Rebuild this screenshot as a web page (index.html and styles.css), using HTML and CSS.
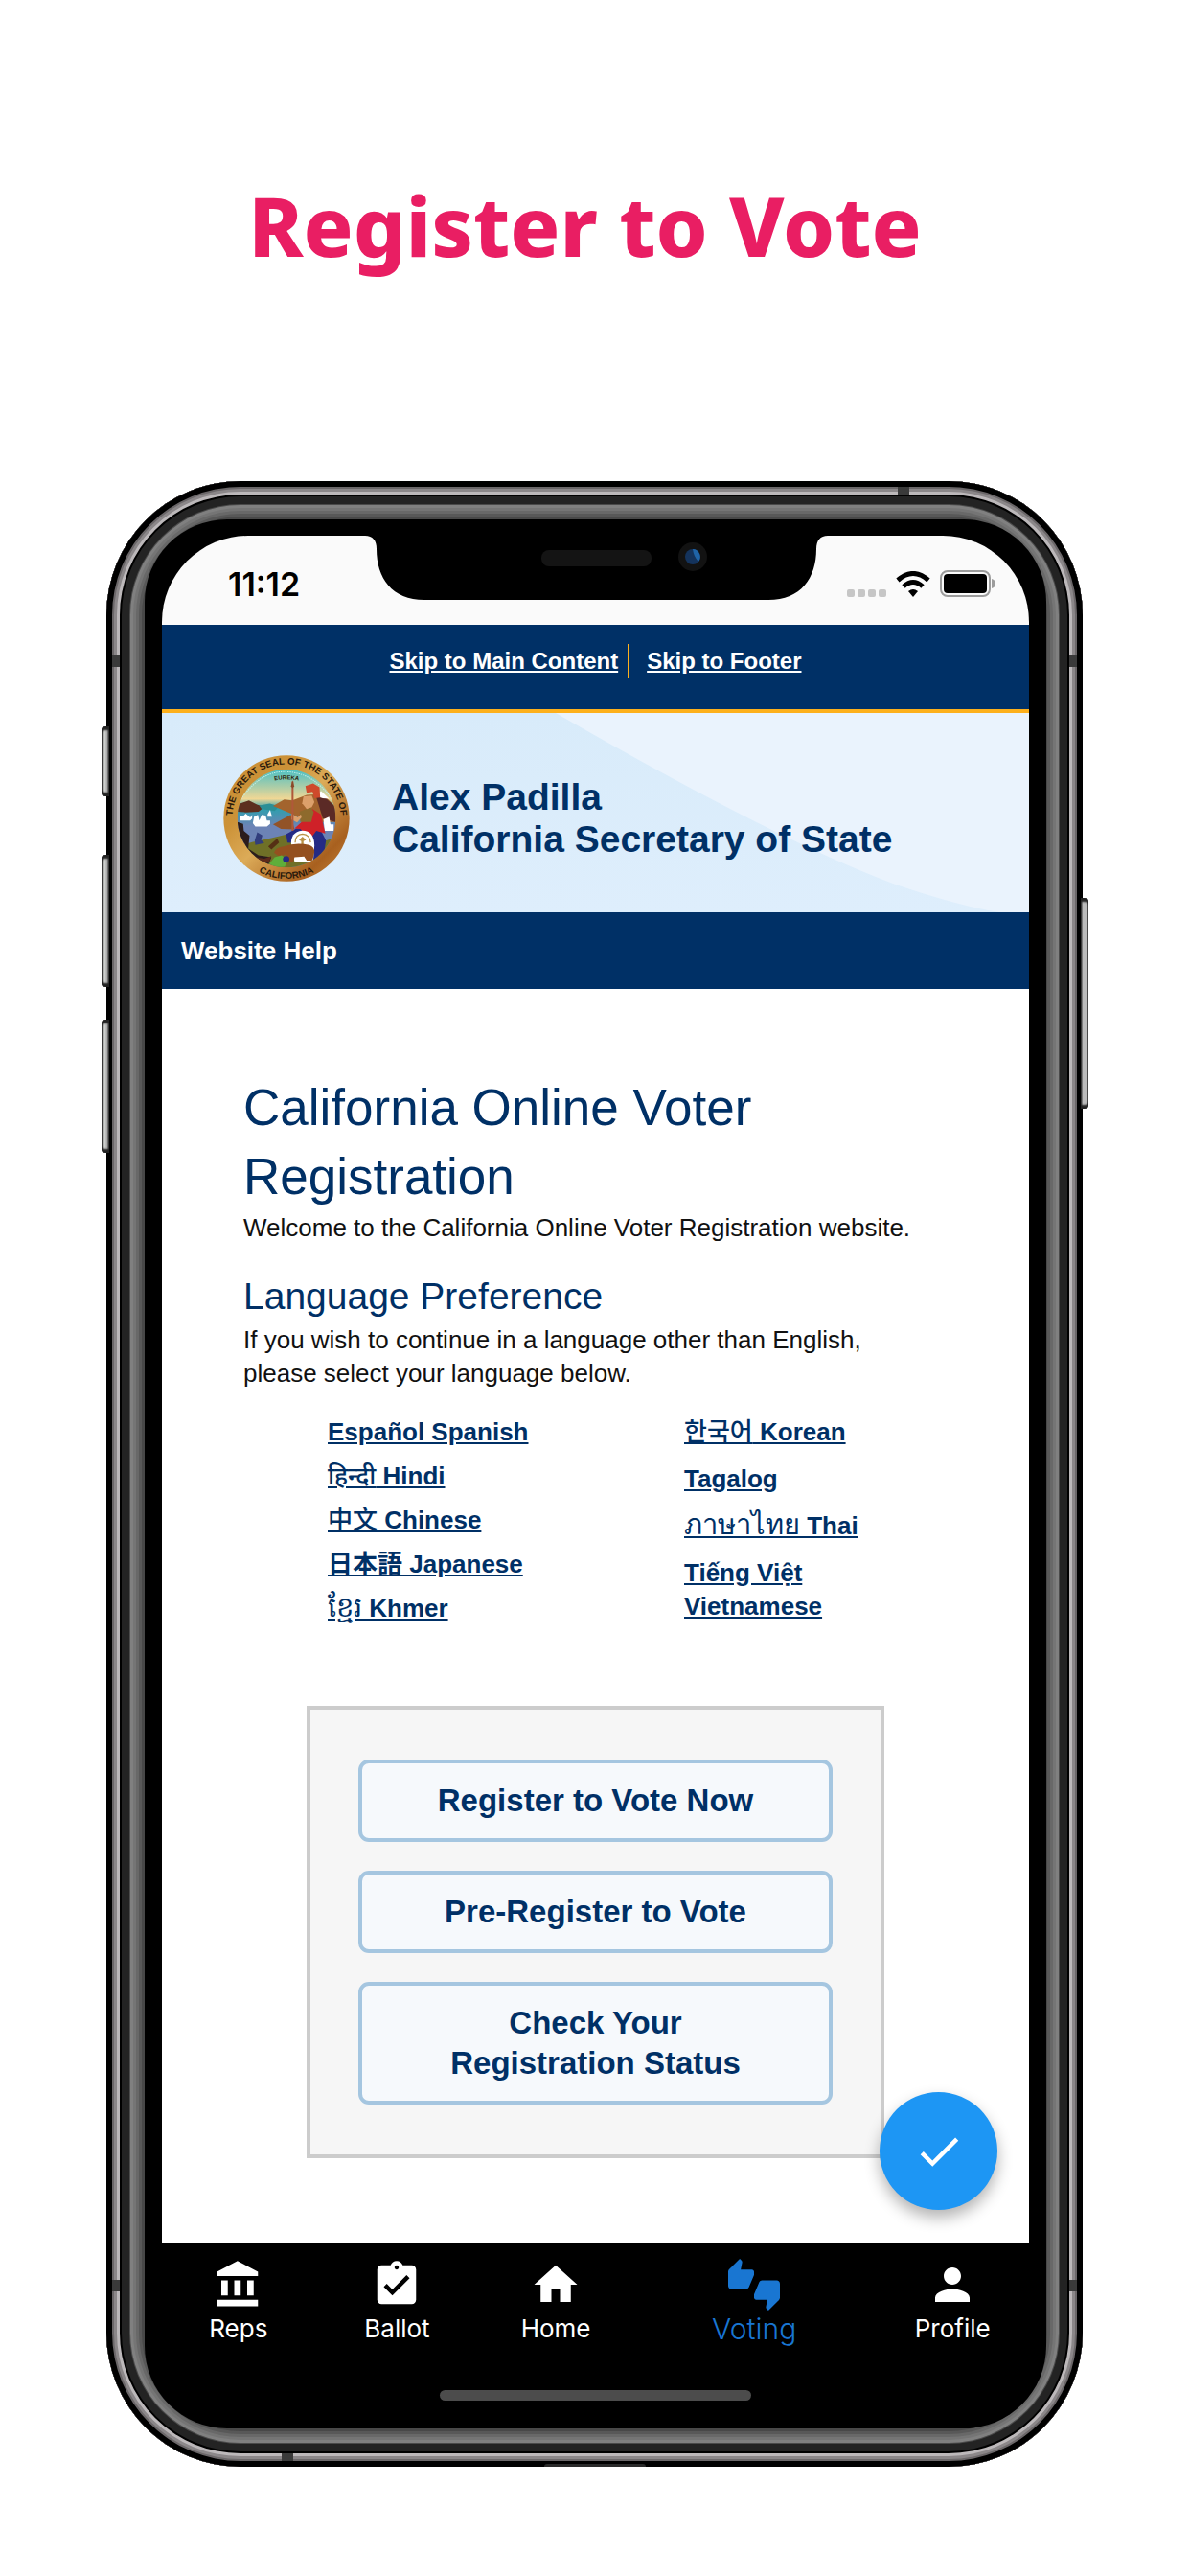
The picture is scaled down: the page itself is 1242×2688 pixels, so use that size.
FILE: index.html
```html
<!DOCTYPE html>
<html lang="en">
<head>
    <meta charset="UTF-8">
    <meta name="viewport" content="width=device-width, initial-scale=1.0">
    <title>Register to Vote</title>
    <link rel="stylesheet" href="styles.css">
</head>
<body>
    <h1 class="headline">Register to Vote</h1>

    <div class="phone">
        <!-- side keys -->
        <span class="key key-mute"></span>
        <span class="key key-up"></span>
        <span class="key key-down"></span>
        <span class="key key-power"></span>
        <!-- antenna lines -->
        <span class="antenna antenna-top"></span>
        <span class="antenna antenna-bottom"></span>
        <span class="antenna antenna-left antenna-high"></span>
        <span class="antenna antenna-left antenna-low"></span>
        <span class="antenna antenna-right antenna-high"></span>
        <span class="antenna antenna-right antenna-low"></span>
        <span class="port"></span>

        <div class="bezel">
            <div class="screen">
                <svg class="notch" viewBox="0 0 483 67" aria-hidden="true">
                    <path d="M0 0C8 0 12 5 12 14C12 44 28 67 62 67H421C455 67 471 44 471 14C471 5 475 0 483 0Z" fill="#000"/>
                    <rect x="184" y="15" width="115" height="17" rx="8" fill="#141414"/>
                    <circle cx="342" cy="22" r="15" fill="#121212"/>
                    <circle cx="342" cy="22" r="8" fill="#14335c"/>
                    <path d="M342 14a8 8 0 0 1 6 13q-5-5-6-13z" fill="#1f64a8"/>
                </svg>

                <div class="status-bar">
                    <span class="time">11:12</span>
                    <div class="status-icons">
                        <svg width="41" height="8" viewBox="0 0 41 8" fill="#c6c6c6">
                            <rect width="8" height="8" rx="2"/>
                            <rect x="11" width="8" height="8" rx="2"/>
                            <rect x="22" width="8" height="8" rx="2"/>
                            <rect x="33" width="8" height="8" rx="2"/>
                        </svg>
                        <svg width="36" height="27" viewBox="0 0 36 27">
                            <path d="M2 9.500Q18-4.500 34 9.500M8 16Q18 7 28 16" fill="none" stroke="#000" stroke-width="5"/>
                            <path d="M13 21Q18 17 23 21L18 27z"/>
                        </svg>
                        <svg width="59" height="28" viewBox="0 0 59 28">
                            <rect x="1" y="1" width="51" height="26" rx="7" fill="none" stroke="#9c9c9c" stroke-width="2"/>
                            <rect x="4" y="4" width="45" height="20" rx="4"/>
                            <path d="M54 9q4 1 4 5t-4 5z" fill="#9c9c9c"/>
                        </svg>
                    </div>
                </div>

                <nav class="skip-links">
                    <a href="#main">Skip to Main Content</a>
                    <a href="#footer">Skip to Footer</a>
                </nav>

                <header class="site-header">
                    <svg class="swoosh" viewBox="0 0 905 208" preserveAspectRatio="none" aria-hidden="true">
                        <path d="M411 0Q640 132 763 178Q830 201 874 208H905V0Z" fill="#eaf3fd"/>
                    </svg>
                    <svg class="seal" viewBox="40 54 394 394" role="img" aria-label="Great Seal of the State of California">
                        <defs>
                            <linearGradient id="gold" x1="0" y1="0" x2="1" y2="1">
                                <stop offset="0" stop-color="#c98f35"/>
                                <stop offset=".3" stop-color="#cc9238"/>
                                <stop offset=".5" stop-color="#dcab58"/>
                                <stop offset=".8" stop-color="#a8601f"/>
                                <stop offset="1" stop-color="#c98a3c"/>
                            </linearGradient>
                            <linearGradient id="sky" x1="0" y1="0" x2="0" y2="1">
                                <stop offset="0" stop-color="#49bfc4"/>
                                <stop offset=".3" stop-color="#efd795"/>
                                <stop offset=".4" stop-color="#2f9fae"/>
                                <stop offset=".58" stop-color="#6c83b5"/>
                                <stop offset="1" stop-color="#6c83b5"/>
                            </linearGradient>
                            <clipPath id="disc"><circle cx="237" cy="251" r="153"/></clipPath>
                            <path id="ringTop" d="M76 303A169 169 0 1 1 398 303"/>
                            <path id="ringBottom" d="M104 384A188 188 0 0 0 370 384"/>
                            <path id="eureka" d="M185 137Q237 122 290 137"/>
                        </defs>
                        <circle cx="237" cy="251" r="196" fill="url(#gold)"/>
                        <g clip-path="url(#disc)">
                            <rect x="84" y="98" width="306" height="306" fill="url(#sky)"/>
                            <path d="M96 190Q160 100 237 106Q320 108 378 190" fill="none" stroke="#c5f1ee" stroke-width="3" stroke-dasharray="4 3"/>
                            <path d="M84 208L120 195L145 208L168 215L150 230L110 232L84 230Z" fill="#5c2f1e"/>
                            <path d="M152 211L185 205L215 213L200 228L160 222Z" fill="#2b8f96"/>
                            <path d="M195 212L230 192L255 195L300 178L350 175L390 215V262H300L250 235Z" fill="#a3642d"/>
                            <path d="M330 185L350 180L390 215V262L350 250Z" fill="#5b2a26"/>
                            <path d="M325 180L345 166L370 190L350 188Z" fill="#fff"/>
                            <path d="M195 270L250 240L262 285L220 284Z" fill="#925328"/>
                            <path d="M84 338L130 325L190 312L240 300L330 330L390 310V404H84Z" fill="#6f7027"/>
                            <path d="M84 262L102 268L104 290L122 305L118 345L150 366L190 372L180 396L130 390L84 340Z" fill="#2b1c1c"/>
                            <g fill="#fff">
                                <path d="M136 246L148 240L152 258L160 240L172 242L176 258H186V268L176 276H140L132 266Z"/>
                                <path d="M92 242H104L110 236L124 248L130 240V252L124 258H94Z"/>
                                <path d="M178 238L186 224L192 246H178Z"/>
                                <path d="M352 254L370 246L374 270H384V290H356Z"/>
                            </g>
                            <path d="M138 320L146 294L162 304L158 318L168 328L140 334Z" fill="#313d7c"/>
                            <path d="M180 338L208 314L214 326L190 348Z" fill="#553014"/>
                            <path d="M236 300L268 282L345 290L360 320L352 372L322 384L300 330L240 326Z" fill="#252a84"/>
                            <path d="M318 222L344 238L358 298L330 290L312 314L280 284L262 282L284 262Z" fill="#cf2128"/>
                            <path d="M278 230L312 216L322 230L314 262L280 262Z" fill="#8e6a2c"/>
                            <path d="M290 182L316 180L324 200L316 216L300 222L286 204Z" fill="#dca06b"/>
                            <path d="M296 150L320 142L340 154L342 186L324 188L318 168L300 172Z" fill="#cf4a2c"/>
                            <path d="M252 236L272 248L282 238L284 248L270 264L252 254Z" fill="#dca06b"/>
                            <path d="M256 136V290" stroke="#b0583a" stroke-width="6"/>
                            <path d="M256 132L261 150L256 158L251 150Z" fill="#8a4a2a"/>
                            <path d="M252 334Q248 294 286 289Q324 290 324 336L320 386H262Z" fill="#fff"/>
                            <path d="M264 326Q264 302 287 300Q310 302 312 326" fill="none" stroke="#b99247" stroke-width="4"/>
                            <path d="M276 318L287 308L298 318L290 322V334H283V322Z" fill="#b99247"/>
                            <path d="M198 358Q204 340 228 338Q268 324 308 334Q324 340 324 356L318 382H300L292 370L262 372L258 386H238L234 364L214 370Z" fill="#94501f"/>
                            <path d="M184 392L200 372L222 366L240 380L232 402L200 404Z" fill="#5fae3a"/>
                            <circle cx="236" cy="378" r="10" fill="#252a84"/>
                            <path d="M142 372L168 376L190 368L182 388L160 390Z" fill="#5d2a1b"/>
                        </g>
                        <text class="seal-text"><textPath href="#ringTop" startOffset="50%">THE GREAT SEAL OF THE STATE OF</textPath></text>
                        <text class="seal-text"><textPath href="#ringBottom" startOffset="50%">CALIFORNIA</textPath></text>
                        <text class="seal-text seal-motto"><textPath href="#eureka" startOffset="50%">EUREKA</textPath></text>
                    </svg>
                    <p class="office">Alex Padilla<br>California Secretary of State</p>
                </header>

                <nav class="menu-bar">
                    <a href="#help">Website Help</a>
                </nav>

                <main class="content" id="main">
                    <h2>California Online Voter Registration</h2>
                    <p>Welcome to the California Online Voter Registration website.</p>
                    <h3>Language Preference</h3>
                    <p>If you wish to continue in a language other than English, please select your language below.</p>

                    <div class="languages">
                        <ul>
                            <li><a href="#es">Español Spanish</a></li>
                            <li><a href="#hi"><span class="thin" lang="hi">हिन्दी</span> Hindi</a></li>
                            <li><a href="#zh"><span class="thin" lang="zh">中文</span> Chinese</a></li>
                            <li><a href="#ja"><span lang="ja">日本語</span> Japanese</a></li>
                            <li><a href="#km"><span class="thin tall" lang="km">ខ្មែរ</span> Khmer</a></li>
                        </ul>
                        <ul class="wide">
                            <li><a href="#ko"><span class="thin" lang="ko">한국어</span> Korean</a></li>
                            <li><a href="#tl">Tagalog</a></li>
                            <li><a href="#th"><span class="thin tall" lang="th">ภาษาไทย</span> Thai</a></li>
                            <li><a href="#vi">Tiếng Việt Vietnamese</a></li>
                        </ul>
                    </div>

                    <div class="actions">
                        <button type="button">Register to Vote Now</button>
                        <button type="button">Pre-Register to Vote</button>
                        <button type="button">Check Your<br>Registration Status</button>
                    </div>

                    <button type="button" class="fab" aria-label="Done">
                        <svg viewBox="0 0 24 24"><path d="M9 16.170L4.830 12l-1.420 1.410L9 19 21 7l-1.410-1.410z"/></svg>
                    </button>
                </main>

                <footer class="tab-bar" id="footer">
                    <nav class="tabs">
                        <a href="#reps">
                            <svg viewBox="0 0 24 24"><path d="M4 10v7h3v-7H4zm6 0v7h3v-7h-3zM2 22h19v-3H2v3zm14-12v7h3v-7h-3zm-4.500-9L2 6v2h19V6l-9.500-5z"/></svg>
                            Reps
                        </a>
                        <a href="#ballot">
                            <svg viewBox="0 0 24 24"><path d="M19 3h-4.180C14.400 1.840 13.300 1 12 1c-1.300 0-2.400.84-2.820 2H5c-1.100 0-2 .9-2 2v14c0 1.100.9 2 2 2h14c1.100 0 2-.9 2-2V5c0-1.100-.9-2-2-2zm-7 0c.55 0 1 .45 1 1s-.45 1-1 1-1-.45-1-1 .45-1 1-1zm-2 14l-4-4 1.410-1.410L10 14.170l6.590-6.590L18 9l-8 8z"/></svg>
                            Ballot
                        </a>
                        <a href="#home">
                            <svg viewBox="0 0 24 24"><path d="M10 20v-6h4v6h5v-8h3L12 3 2 12h3v8z"/></svg>
                            Home
                        </a>
                        <a href="#voting" class="active">
                            <svg viewBox="0 0 24 24"><path d="M12 6c0-.55-.45-1-1-1H5.820l.66-3.180.02-.23c0-.31-.13-.59-.33-.8L5.380 0 .44 4.940C.17 5.210 0 5.590 0 6v6.500c0 .83.67 1.500 1.500 1.500h6.750c.62 0 1.150-.38 1.380-.91l2.260-5.290c.07-.17.11-.36.11-.55V6zm10.500 4h-6.750c-.62 0-1.150.38-1.380.91l-2.260 5.290c-.07.17-.11.36-.11.55V18c0 .55.45 1 1 1h5.180l-.66 3.180-.02.24c0 .31.13.59.33.8l.79.78 4.940-4.940c.27-.27.44-.65.44-1.060v-6.500c0-.83-.67-1.500-1.500-1.500z"/></svg>
                            Voting
                        </a>
                        <a href="#profile">
                            <svg viewBox="0 0 24 24"><path d="M12 12c2.210 0 4-1.790 4-4s-1.790-4-4-4-4 1.790-4 4 1.790 4 4 4zm0 2c-2.670 0-8 1.340-8 4v2h16v-2c0-2.660-5.330-4-8-4z"/></svg>
                            Profile
                        </a>
                    </nav>
                    <div class="home-indicator"></div>
                </footer>
            </div>
        </div>
    </div>
</body>
</html>
```
FILE: styles.css
```css
body {
    margin: 0;
    padding: 176px 112px 114px 111px;
    background-color: #fff;
    font-family: "Liberation Sans", Arial, "Noto Sans", "Noto Sans CJK SC", sans-serif;
}
h2, h3, p, ul {
    margin: 0;
    padding: 0;
    font-weight: normal;
}
.headline {
    margin: 0 20px 208px 0;
    color: #e91e63;
    font-family: "Noto Sans", sans-serif;
    font-size: 86px;
    font-weight: 800;
    line-height: 118px;
    text-align: center;
}

/* Device */
.phone {
    position: relative;
    padding: 40px 38px 40px 40px;
    border-radius: 140px;
    background-color: #484848;
    box-shadow:
        inset 0 0 0 6px #000,
        inset 0 0 0 8px #6b6769,
        inset 0 0 0 11px #8b8789,
        inset 0 0 0 14px #bcb8ba,
        inset 0 0 0 16px #000,
        inset 0 0 0 24px #232323,
        inset 0 0 0 25px #4a4a4a,
        inset 0 0 0 28px #808080,
        inset 0 0 0 31px #757575,
        inset 0 0 0 34px #686868,
        inset 0 0 0 37px #585858;
}
.bezel {
    padding: 17px 18px 18px;
    border-radius: 86px;
    background-color: #000;
}
.screen {
    position: relative;
    overflow: hidden;
    border-radius: 90px;
    background-color: #000;
}
.key {
    position: absolute;
    left: -5px;
    width: 8px;
    border-radius: 4px 0 0 4px;
    background: linear-gradient(90deg, #333, #d2d4d2 40%, #aaa 70%, #333);
    box-shadow: inset 0 4px 2px #222, inset 0 -4px 2px #222;
}
.key-mute {
    top: 256px;
    height: 73px;
}
.key-up {
    top: 390px;
    height: 138px;
}
.key-down {
    top: 562px;
    height: 139px;
}
.key-power {
    top: 435px;
    left: auto;
    right: -6px;
    height: 220px;
    border-radius: 0 4px 4px 0;
    background: linear-gradient(90deg, #333, #bbb 30%, #bbb 70%, #555);
}
.antenna {
    position: absolute;
    width: 12px;
    height: 8px;
    background-color: #3a3a3a;
}
.antenna-top {
    top: 6px;
    right: 181px;
}
.antenna-bottom {
    bottom: 6px;
    left: 183px;
}
.antenna-left,
.antenna-right {
    width: 8px;
    height: 12px;
}
.antenna-left {
    left: 6px;
}
.antenna-right {
    right: 6px;
}
.antenna-high {
    top: 182px;
}
.antenna-low {
    bottom: 183px;
}
.port {
    position: absolute;
    bottom: 0;
    left: 50%;
    width: 106px;
    height: 3px;
    margin-left: -53px;
    border-radius: 3px 3px 0 0;
    background-color: #2a2a2a;
}
.notch {
    position: absolute;
    top: 0;
    left: 50%;
    width: 483px;
    height: 67px;
    margin-left: -241px;
}

/* Status bar */
.status-bar {
    display: flex;
    justify-content: space-between;
    align-items: flex-end;
    height: 64px;
    padding: 0 34px 29px 69px;
    background-color: #fafafa;
}
.time {
    font-family: Inter, sans-serif;
    font-size: 34px;
    font-weight: 600;
    line-height: 26px;
}
.status-icons {
    display: flex;
    align-items: flex-end;
    gap: 10px;
}

/* Site header */
.skip-links {
    display: flex;
    justify-content: center;
    align-items: flex-start;
    padding: 20px 0 32px;
    border-bottom: 4px solid #fdb01c;
    background-color: #003066;
}
.skip-links a {
    color: #fff;
    font-size: 24px;
    font-weight: bold;
    line-height: 36px;
}
.skip-links a:first-child {
    padding-right: 10px;
    margin-right: 18px;
    border-right: 2px solid #fdb01c;
}
.site-header {
    position: relative;
    display: flex;
    align-items: center;
    gap: 44px;
    height: 196px;
    padding: 12px 64px 0;
    background: linear-gradient(#d8ebfa, #deeefc);
}
.swoosh {
    position: absolute;
    top: 0;
    left: 0;
    width: 100%;
    height: 100%;
}
.seal {
    position: relative;
    flex: none;
    width: 132px;
    height: 132px;
}
.seal-text {
    fill: #2b1a0c;
    font-size: 29px;
    font-weight: bold;
    text-anchor: middle;
}
.seal-motto {
    font-size: 18px;
}
.office {
    position: relative;
    color: #003066;
    font-size: 39px;
    font-weight: bold;
    line-height: 44px;
}
.menu-bar {
    padding: 20px;
    background-color: #003066;
}
.menu-bar a {
    display: block;
    color: #fff;
    font-size: 26px;
    font-weight: bold;
    line-height: 40px;
    text-decoration: none;
}

/* Main content */
.content {
    position: relative;
    padding: 88px 85px 89px;
    background-color: #fff;
}
.content h2 {
    color: #003066;
    font-size: 53px;
    line-height: 72px;
}
.content h3 {
    margin-top: 26px;
    color: #003066;
    font-size: 39px;
    font-weight: normal;
    line-height: 56px;
}
.content p {
    max-width: 720px;
    color: #111;
    font-size: 26px;
    line-height: 35px;
}
.languages {
    display: grid;
    grid-template-columns: 3fr 2fr;
    padding: 26px 27px 84px 88px;
}
.languages ul {
    display: flex;
    flex-direction: column;
    gap: 11px;
    list-style: none;
}
.languages .wide {
    gap: 14px;
}
.languages li {
    font-size: 26px;
    font-weight: bold;
    line-height: 35px;
}
.languages a {
    color: #003066;
}
.thin {
    font-weight: 500;
}
.tall {
    font-size: 29px;
    line-height: 1;
}
.actions {
    display: flex;
    flex-direction: column;
    gap: 30px;
    margin: 0 66px;
    padding: 52px 50px;
    border: 4px solid #ccc;
    background-color: #f6f6f6;
}
.actions button {
    padding: 18px;
    border: 4px solid #a5c6e0;
    border-radius: 11px;
    background-color: #f6f9fc;
    color: #003066;
    font-family: inherit;
    font-size: 33px;
    font-weight: bold;
    line-height: 42px;
}
.fab {
    position: absolute;
    right: 33px;
    bottom: 35px;
    display: flex;
    justify-content: center;
    align-items: center;
    width: 123px;
    height: 123px;
    padding: 0;
    border: none;
    border-radius: 50%;
    background-color: #1d96f4;
    box-shadow: 0 8px 16px rgba(0, 0, 0, 0.3);
}
.fab svg {
    width: 54px;
    height: 54px;
    fill: #fff;
}

/* Tab bar */
.tab-bar {
    padding: 16px 0 11px;
    background-color: #000;
}
.tabs {
    display: flex;
    margin: 0 -3px;
}
.tabs a {
    display: flex;
    flex: 1;
    flex-direction: column;
    align-items: center;
    gap: 2px;
    color: #fff;
    font-family: Inter, sans-serif;
    font-size: 26px;
    line-height: 34px;
    text-decoration: none;
}
.tabs svg {
    width: 54px;
    height: 54px;
    fill: currentColor;
}
.tabs .active {
    flex: 1.5;
    color: #1976d2;
    font-size: 30px;
    font-weight: 300;
}
.home-indicator {
    width: 36%;
    height: 11px;
    margin: 47px auto 0;
    border-radius: 6px;
    background-color: #4c4c4c;
}
```
